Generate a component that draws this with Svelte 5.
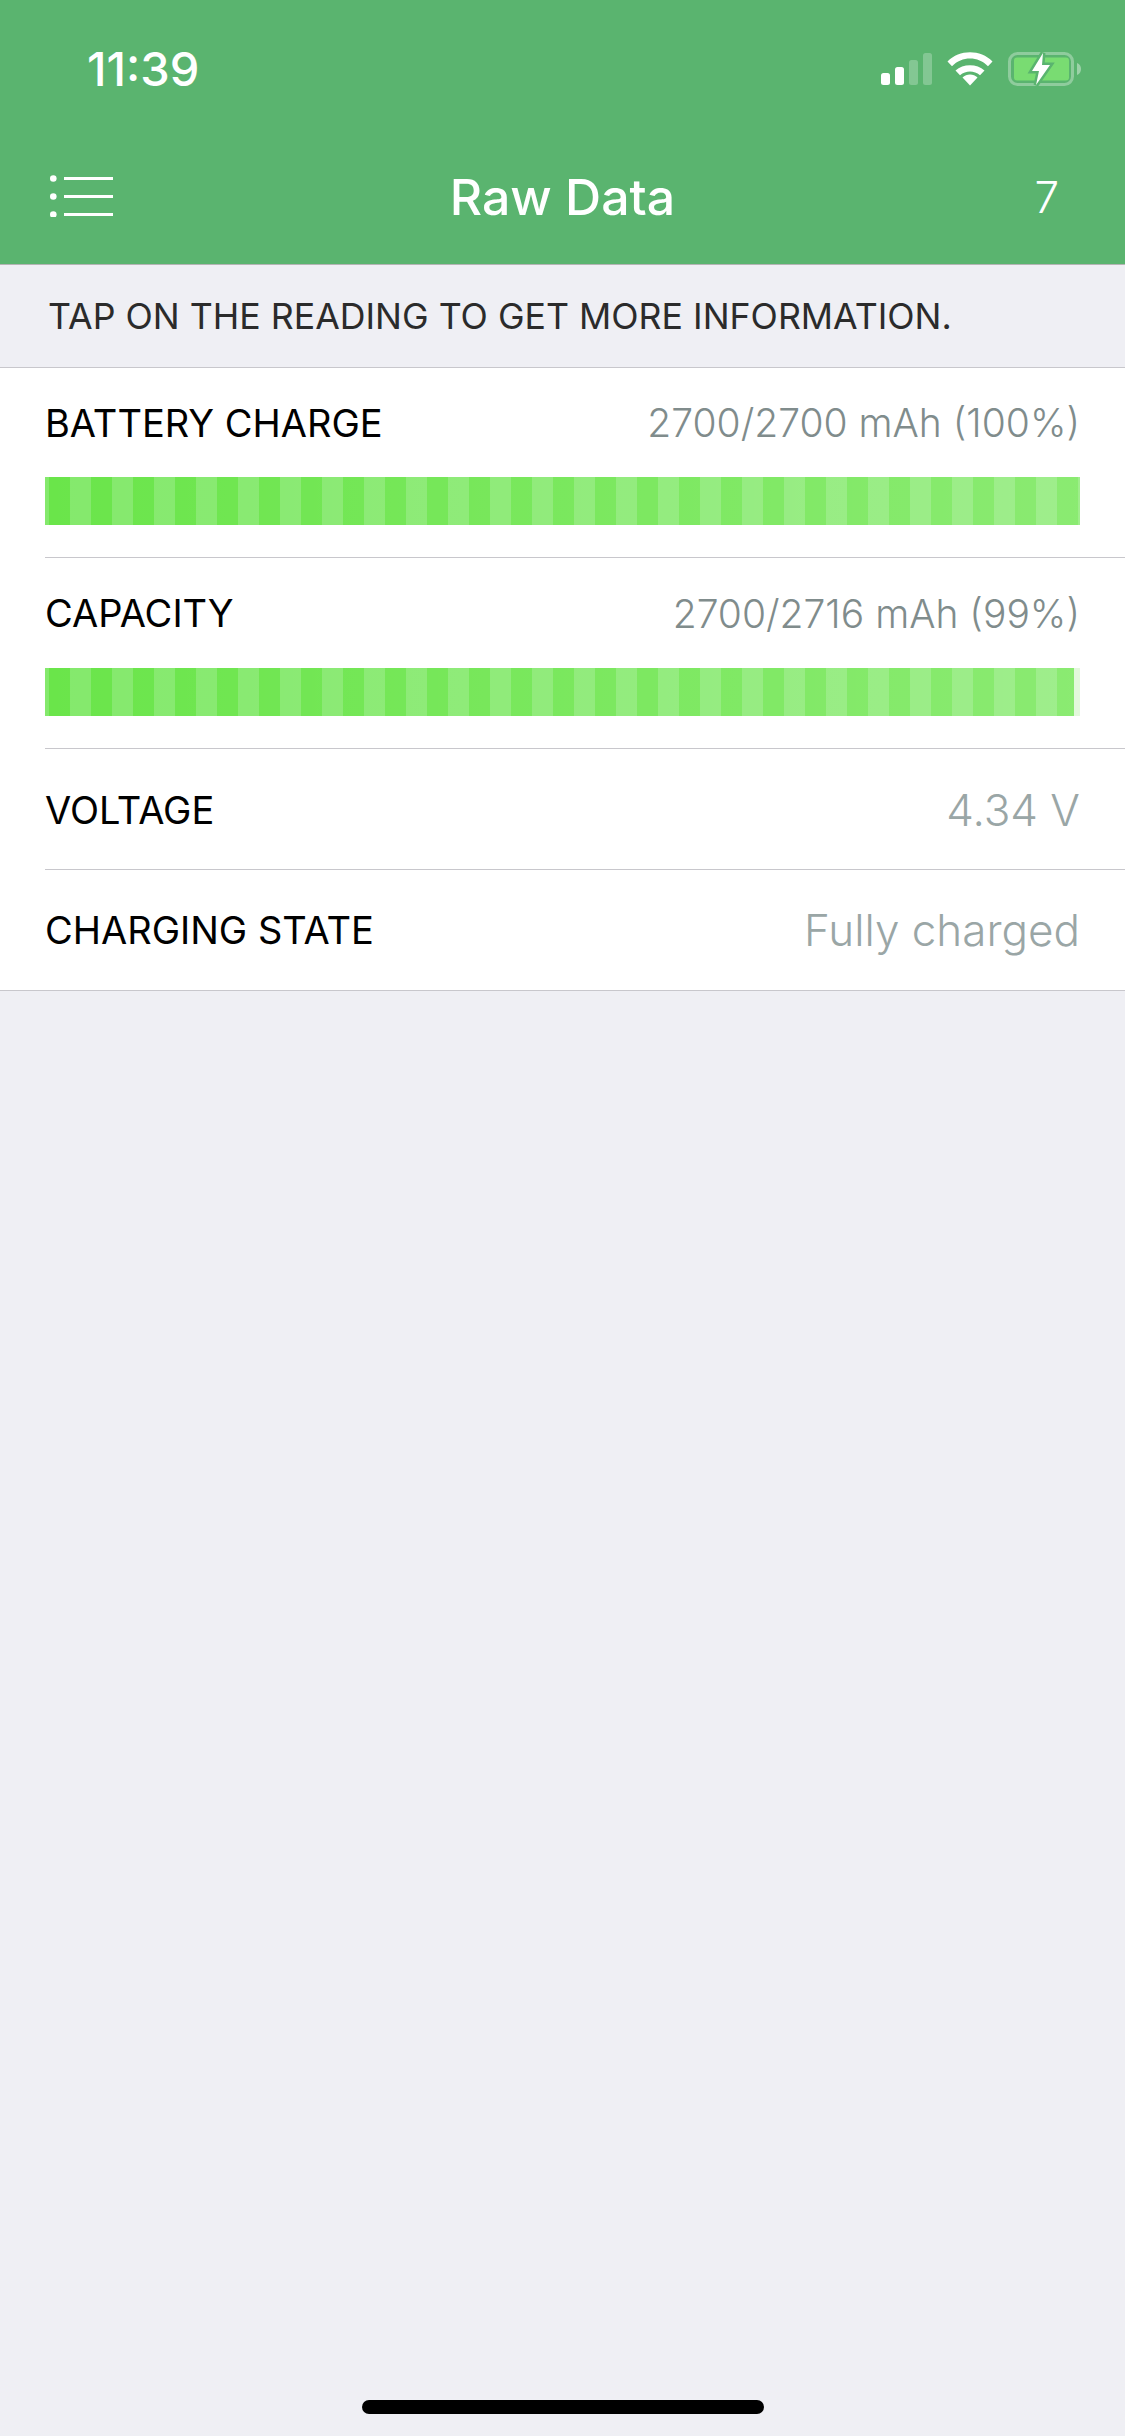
<script lang="ts">
  const readings = [
    { label: 'BATTERY CHARGE', value: '2700/2700 mAh (100%)', fill: 100 },
    { label: 'CAPACITY', value: '2700/2716 mAh (99%)', fill: 99.4 },
    { label: 'VOLTAGE', value: '4.34 V' },
    { label: 'CHARGING STATE', value: 'Fully charged' }
  ];
</script>

<div class="screen">
  <header class="top">
    <div class="status">
      <span class="time">11:39</span>
      <div class="status-icons">
        <svg class="signal" width="51" height="32" viewBox="0 0 51 32" aria-hidden="true">
          <rect x="0" y="20" width="9" height="12" rx="2.5" fill="#fff" />
          <rect x="14" y="14" width="9" height="18" rx="2.5" fill="#fff" />
          <rect x="28" y="7" width="9" height="25" rx="2.5" fill="#fff" opacity="0.25" />
          <rect x="42" y="0" width="9" height="32" rx="2.5" fill="#fff" opacity="0.25" />
        </svg>
        <svg class="wifi" width="46" height="34" viewBox="0 0 46 34" aria-hidden="true">
          <path d="M23 33.500 L15.500 25.500 C19.500 21.500 26.500 21.500 30.500 25.500 Z" fill="#fff" />
          <path d="M8.500 18.500 C16 11.500 30 11.500 37.500 18.500 L33 23.300 C27 18.300 19 18.300 13 23.300 Z" fill="#fff" />
          <path d="M0.500 9.500 C12.500 -2.800 33.500 -2.800 45.500 9.500 L41 14.300 C31 4 15 4 5 14.300 Z" fill="#fff" />
        </svg>
        <svg class="battery" width="74" height="34" viewBox="0 0 74 34" aria-hidden="true">
          <rect x="1.500" y="1.500" width="63" height="31" rx="8" fill="none" stroke="#fff" stroke-opacity="0.32" stroke-width="3" />
          <path d="M69 11 C72 12 73 14.500 73 17 C73 19.500 72 22 69 23 Z" fill="#fff" fill-opacity="0.4" />
          <rect x="6" y="5.500" width="55" height="23" rx="3" fill="#79dc72" />
          <path d="M35 1 L24 19 L31 19 L28 33 L42 13 L34 13 Z" fill="#fff" stroke="#5ab46f" stroke-width="5" stroke-linejoin="miter" paint-order="stroke" />
        </svg>
      </div>
    </div>
    <nav class="nav">
      <svg class="menu" width="64" height="42" viewBox="0 0 64 42" aria-hidden="true">
        <circle cx="4.300" cy="3.500" r="3.300" fill="#fff" />
        <circle cx="4.300" cy="21.500" r="3.300" fill="#fff" />
        <circle cx="4.300" cy="39.500" r="3.300" fill="#fff" />
        <rect x="15" y="2" width="49" height="3" fill="#fff" />
        <rect x="15" y="20" width="49" height="3" fill="#fff" />
        <rect x="15" y="38" width="49" height="3" fill="#fff" />
      </svg>
      <h1>Raw Data</h1>
      <span class="count">7</span>
    </nav>
  </header>

  <p class="hint">TAP ON THE READING TO GET MORE INFORMATION.</p>

  <ul class="list">
    {#each readings as r}
      <li class="row" class:has-bar={r.fill !== undefined}>
        <div class="line">
          <span class="label">{r.label}</span>
          <span class="value">{r.value}</span>
        </div>
        {#if r.fill !== undefined}
          <div class="track">
            <div class="fill" style="width: {r.fill}%"></div>
          </div>
        {/if}
      </li>
    {/each}
  </ul>

  <div class="home"></div>
</div>

<style>
  :global(body) {
    margin: 0;
    background: #efeff4;
  }

  .screen {
    position: relative;
    width: 1125px;
    height: 2436px;
    overflow: hidden;
    background: #efeff4;
    font-family: Inter, "Liberation Sans", sans-serif;
  }

  .top {
    background: #5ab46f;
    height: 265px;
    box-sizing: border-box;
    padding-top: 35px;
    border-bottom: 1px solid #b4b4b4;
    color: #fff;
  }

  .status {
    display: flex;
    align-items: center;
    justify-content: space-between;
    height: 68px;
    padding: 0 43px 0 87px;
  }

  .time {
    font-size: 47px;
    font-weight: 500;
    margin-bottom: 2px;
  }

  .status-icons {
    display: flex;
    align-items: center;
    gap: 15px;
  }

  .nav {
    display: grid;
    grid-template-columns: 1fr auto 1fr;
    align-items: center;
    padding: 0 49px;
    margin-top: 49px;
    height: 88px;
  }

  .menu {
    display: block;
  }

  .nav h1 {
    margin: 2px 0 0;
    font-size: 50px;
    font-weight: 500;
  }

  .count {
    justify-self: end;
    margin: 2px 17px 0 0;
    font-size: 44px;
    font-weight: 300;
  }

  .hint {
    margin: 0;
    height: 102px;
    box-sizing: border-box;
    padding-left: 48px;
    display: flex;
    align-items: center;
    font-size: 35.700px;
    color: #2b2b2b;
    white-space: nowrap;
  }

  .list {
    list-style: none;
    margin: 0;
    padding: 0;
    background: #fff;
    border-top: 1px solid #c8c7cc;
    border-bottom: 1px solid #c8c7cc;
  }

  .row {
    position: relative;
    height: 121px;
    padding: 0 45px;
    box-sizing: border-box;
  }

  .row:last-child {
    height: 120px;
  }

  .row.has-bar {
    height: 190px;
  }

  .row + .row.has-bar {
    height: 191px;
  }

  .row + .row::before {
    content: "";
    position: absolute;
    top: -1px;
    left: 45px;
    right: 0;
    height: 1px;
    background: #c8c7cc;
  }

  .line {
    display: flex;
    align-items: center;
    justify-content: space-between;
    height: 100%;
  }

  .has-bar .line {
    height: 109px;
  }

  .row + .has-bar .line {
    height: 110px;
  }

  .label {
    font-size: 38px;
    color: #000;
  }

  .value {
    font-size: 44px;
    font-weight: 350;
    color: #9aa6a6;
    white-space: nowrap;
  }

  .has-bar .value {
    font-size: 39px;
    color: #808c8c;
  }

  .track {
    height: 48px;
    background: #e3f8dc;
  }

  .fill {
    height: 100%;
    /* stripes fade out to the right */
    background:
      linear-gradient(90deg, rgba(255, 255, 255, 0) 0%, rgba(255, 255, 255, 0.22) 100%),
      repeating-linear-gradient(90deg, #84e96c 0 4px, #6ae54a 4px 25px, #84e96c 25px 42px);
  }

  .home {
    position: absolute;
    left: 362px;
    bottom: 22px;
    width: 402px;
    height: 14px;
    border-radius: 7px;
    background: #000;
  }
</style>
